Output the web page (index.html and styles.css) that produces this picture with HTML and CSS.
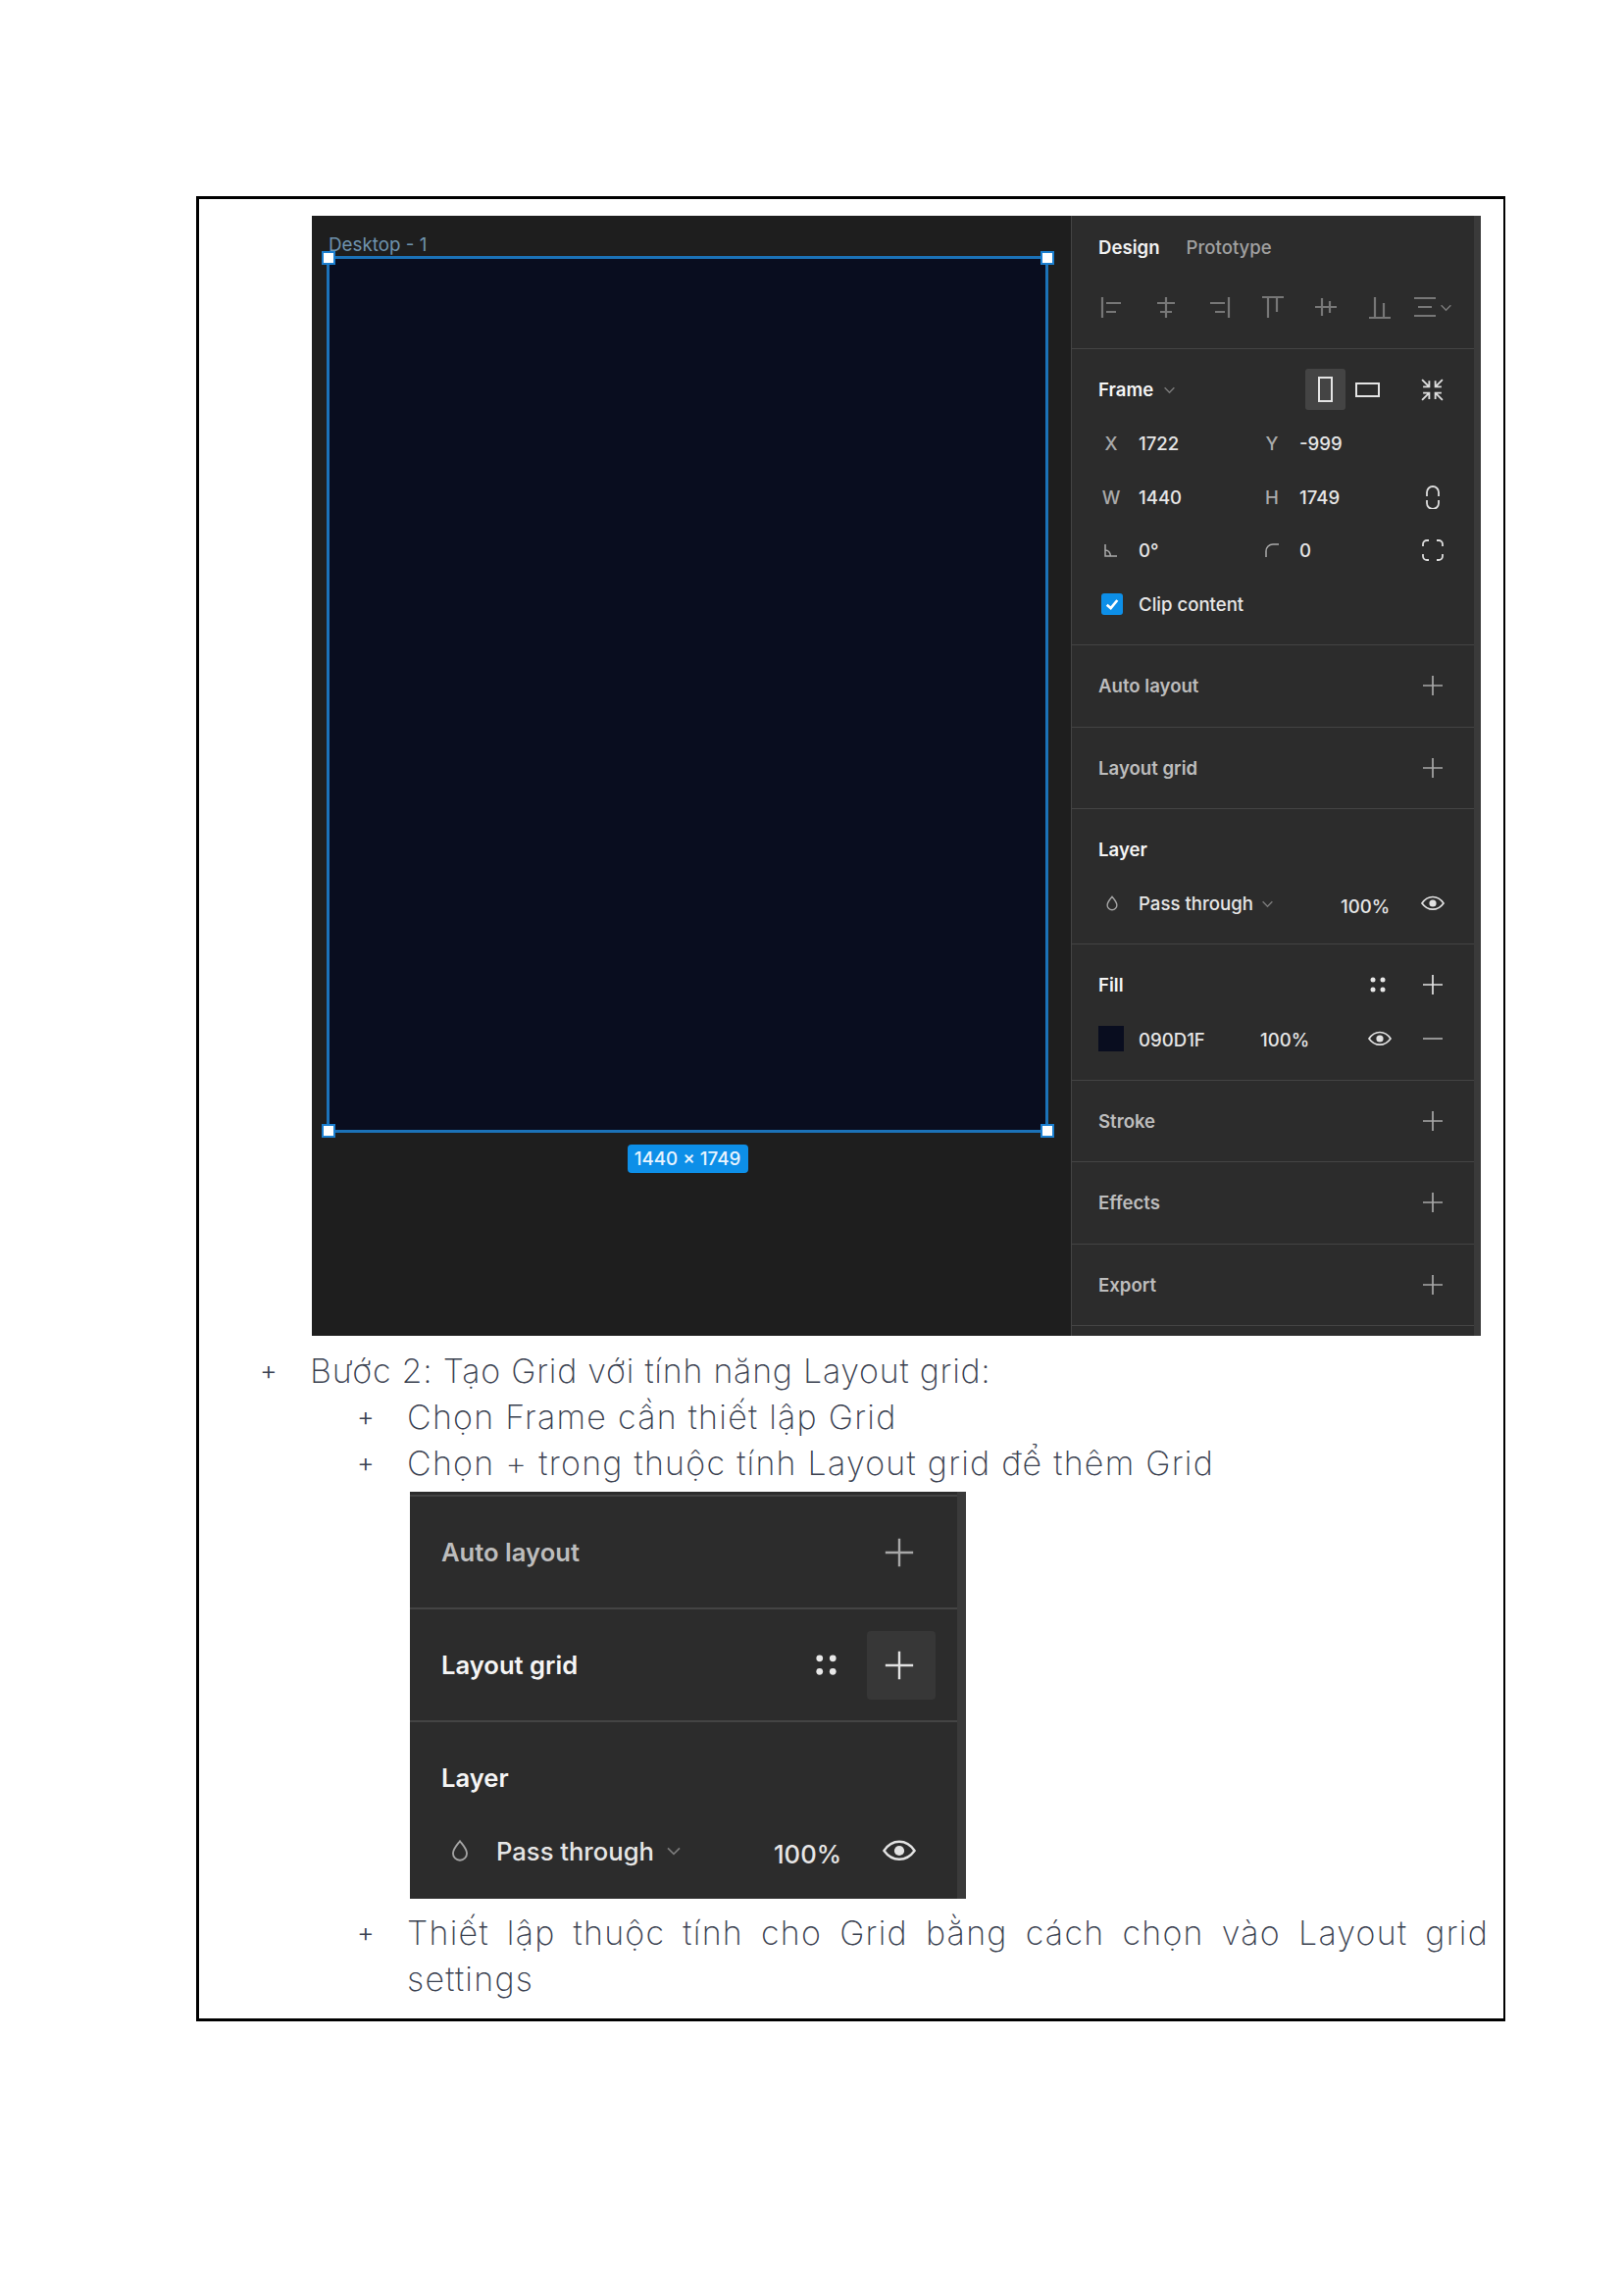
FILE: index.html
```html
<!DOCTYPE html>
<html lang="vi">
<head>
<meta charset="utf-8">
<title>Layout grid</title>
<link rel="stylesheet" href="styles.css">
</head>
<body>
<svg class="defs" width="0" height="0" aria-hidden="true">
  <symbol id="plus" viewBox="0 0 24 24"><path d="M12 2v20M2 12h20"/></symbol>
  <symbol id="minus" viewBox="0 0 24 24"><path d="M2 12h20"/></symbol>
  <symbol id="eye" viewBox="0 0 24 24"><path d="M1 12c3-4.500 6.800-6.500 11-6.500S20 7.500 23 12c-3 4.200-6.800 6.200-11 6.200S4 16.200 1 12z"/><circle class="solid" cx="12" cy="12" r="3.600"/></symbol>
  <symbol id="dots" viewBox="0 0 24 24"><circle class="solid" cx="6" cy="6" r="3"/><circle class="solid" cx="18" cy="6" r="3"/><circle class="solid" cx="6" cy="18" r="3"/><circle class="solid" cx="18" cy="18" r="3"/></symbol>
  <symbol id="drop" viewBox="0 0 24 24"><path d="M12 3c3.500 4.500 6.500 7.500 6.500 11.500a6.500 6.500 0 0 1-13 0C5.500 10.500 8.500 7.500 12 3z"/></symbol>
  <symbol id="chev" viewBox="0 0 12 12"><path d="M1.500 4l4.500 4.500L10.500 4"/></symbol>
</svg>

<main class="doc">
  <section class="shot">
    <div class="canvas">
      <div class="frame-col">
        <div class="frame-name">Desktop - 1</div>
        <div class="frame">
          <i class="handle handle--tl"></i><i class="handle handle--tr"></i>
          <i class="handle handle--bl"></i><i class="handle handle--br"></i>
        </div>
        <div class="size-badge">1440 × 1749</div>
      </div>
    </div>
    <aside class="panel">
      <div class="sec sec--tabs">
        <div class="tabs"><span class="tab tab--on">Design</span><span class="tab">Prototype</span></div>
        <div class="aligns">
          <svg class="align" viewBox="0 0 24 24"><path d="M2 2v21M6 8h15M6 17h10"/></svg>
          <svg class="align" viewBox="0 0 24 24"><path d="M12 2v21M3 8h18M6 17h12"/></svg>
          <svg class="align" viewBox="0 0 24 24"><path d="M22 2v21M3 8h15M8 17h10"/></svg>
          <svg class="align" viewBox="0 0 24 24"><path d="M1 2h22M7 2v21M16 2v15"/></svg>
          <svg class="align" viewBox="0 0 24 24"><path d="M1 12h22M8 3v18M16 6v12"/></svg>
          <svg class="align" viewBox="0 0 24 24"><path d="M1 23h22M7 2v21M16 8v15"/></svg>
          <span class="align-more">
            <svg class="align" viewBox="0 0 24 24"><path d="M1 3h22M5 12h14M1 21h22"/></svg>
            <svg class="chev" viewBox="0 0 12 12"><use href="#chev"/></svg>
          </span>
        </div>
      </div>

      <div class="sec sec--frame">
        <div class="frame-head">
          <span class="title title--on">Frame</span>
          <svg class="chev chev--frame" viewBox="0 0 12 12"><use href="#chev"/></svg>
          <span class="orient orient--on"><i class="page-p"></i></span>
          <span class="orient"><i class="page-l"></i></span>
          <svg class="collapse" viewBox="0 0 24 24"><path d="M2 2l7 7M9 3v6H3M22 2l-7 7M15 3v6h6M2 22l7-7M9 21v-6H3M22 22l-7-7M15 21v-6h6"/></svg>
        </div>
        <div class="props">
          <span class="lab">X</span><span class="val">1722</span><span class="lab">Y</span><span class="val">-999</span><span></span>
          <span class="lab">W</span><span class="val">1440</span><span class="lab">H</span><span class="val">1749</span>
          <svg class="side" viewBox="0 0 24 24"><path d="M6 11V7a6 6 0 0 1 12 0v4M6 15v3a6 6 0 0 0 12 0v-3"/></svg>
          <span class="lab"><svg class="mini" viewBox="0 0 16 16"><path d="M2 2v12h12M2 8c3 0 5 2 5.500 6"/></svg></span><span class="val">0°</span>
          <span class="lab"><svg class="mini" viewBox="0 0 16 16"><path d="M2 15V9a7 7 0 0 1 7-7h6"/></svg></span><span class="val">0</span>
          <svg class="side" viewBox="0 0 24 24"><path d="M2 8V6a4 4 0 0 1 4-4h2M16 2h2a4 4 0 0 1 4 4v2M22 16v2a4 4 0 0 1-4 4h-2M8 22H6a4 4 0 0 1-4-4v-2"/></svg>
        </div>
        <div class="clip">
          <span class="check"><svg viewBox="0 0 12 12"><path d="M2 6.500l3 2.500 5-6"/></svg></span>
          <span class="val">Clip content</span>
        </div>
      </div>

      <div class="sec sec--row"><span class="title">Auto layout</span><svg class="ico"><use href="#plus"/></svg></div>
      <div class="sec sec--row"><span class="title">Layout grid</span><svg class="ico"><use href="#plus"/></svg></div>

      <div class="sec sec--stack">
        <div class="stack-head"><span class="title title--on">Layer</span></div>
        <div class="layer-row">
          <svg class="ico ico--drop"><use href="#drop"/></svg>
          <span class="pass"><span class="val">Pass through</span><svg class="chev" viewBox="0 0 12 12"><use href="#chev"/></svg></span>
          <span class="val pct">100%</span>
          <svg class="ico ico--bright"><use href="#eye"/></svg>
        </div>
      </div>

      <div class="sec sec--stack">
        <div class="stack-head">
          <span class="title title--on">Fill</span>
          <span class="actions"><svg class="ico ico--dots"><use href="#dots"/></svg><svg class="ico ico--bright"><use href="#plus"/></svg></span>
        </div>
        <div class="fill-row">
          <i class="swatch"></i>
          <span class="val">090D1F</span>
          <span class="val">100%</span>
          <span class="actions"><svg class="ico ico--bright"><use href="#eye"/></svg><svg class="ico"><use href="#minus"/></svg></span>
        </div>
      </div>

      <div class="sec sec--row"><span class="title">Stroke</span><svg class="ico"><use href="#plus"/></svg></div>
      <div class="sec sec--row"><span class="title">Effects</span><svg class="ico"><use href="#plus"/></svg></div>
      <div class="sec sec--row"><span class="title">Export</span><svg class="ico"><use href="#plus"/></svg></div>
    </aside>
  </section>

  <p class="item item--l1"><span class="bullet">+</span><span>Bước 2: Tạo Grid với tính năng Layout grid:</span></p>
  <p class="item item--l2"><span class="bullet">+</span><span>Chọn Frame cần thiết lập Grid</span></p>
  <p class="item item--l2"><span class="bullet">+</span><span>Chọn + trong thuộc tính Layout grid để thêm Grid</span></p>

  <aside class="panel panel--crop">
    <div class="sec sec--cap"></div>
    <div class="sec sec--row"><span class="title">Auto layout</span><svg class="ico"><use href="#plus"/></svg></div>
    <div class="sec sec--row">
      <span class="title title--on">Layout grid</span>
      <span class="actions"><svg class="ico ico--dots"><use href="#dots"/></svg><span class="add-btn"><svg class="ico ico--bright"><use href="#plus"/></svg></span></span>
    </div>
    <div class="sec sec--stack sec--last">
      <div class="stack-head"><span class="title title--on">Layer</span></div>
      <div class="layer-row">
        <svg class="ico ico--drop"><use href="#drop"/></svg>
        <span class="pass"><span class="val">Pass through</span><svg class="chev" viewBox="0 0 12 12"><use href="#chev"/></svg></span>
        <span class="val pct">100%</span>
        <svg class="ico ico--bright"><use href="#eye"/></svg>
      </div>
    </div>
  </aside>

  <p class="item item--l2 item--last"><span class="bullet">+</span><span class="just">Thiết lập thuộc tính cho Grid bằng cách chọn vào Layout grid settings</span></p>
</main>
</body>
</html>
```

FILE: styles.css
```css
* { box-sizing: border-box; }
html, body { margin: 0; background: #fff; }
body { padding: 200px 121px 0 200px; font-family: Inter, "Liberation Sans", sans-serif; }
.defs { position: absolute; }
svg { fill: none; stroke: currentColor; display: block; }
.solid { fill: currentColor; stroke: none; }

.doc { width: 1335px; height: 1861px; border: 3px solid #000; border-right-width: 2px; padding-top: 17px; }

/* screenshot */
.shot { display: flex; width: 1192px; height: 1142px; margin-left: 115px; background: #1e1e1e; overflow: hidden; }
.canvas { width: 774px; flex: none; padding-left: 15px; }
.frame-col { width: 736px; display: flex; flex-direction: column; align-items: center; }
.frame-name { align-self: flex-start; height: 41px; padding: 18px 0 0 2px; font-size: 18.800px; line-height: 24px; color: #6f93ae; }
.frame { position: relative; width: 736px; height: 894px; background: #090d1f; border: 3px solid #1b72b8; }
.handle { position: absolute; width: 14px; height: 14px; background: #fff; border: 2px solid #1b7fd0; }
.handle--tl { left: -8px; top: -8px; }
.handle--tr { right: -9px; top: -8px; }
.handle--bl { left: -8px; bottom: -8px; }
.handle--br { right: -9px; bottom: -8px; }
.size-badge { margin-top: 12px; width: 123px; height: 29px; border-radius: 4px; background: #0d8fe8; color: #e8f4ff; font-size: 18.800px; font-weight: 500; line-height: 29px; text-align: center; }

/* panel */
.panel { width: 418px; flex: none; height: 1142px; background: #2c2c2c; border-left: 1px solid #444; border-right: 7px solid #3a3a3a; overflow: hidden; color: #eee; font-size: 18.600px; }
.sec { border-bottom: 1.5px solid #444; padding: 0 30px 0 27px; }
.title { font-weight: 600; color: #bdbdbd; }
.title--on { color: #f5f5f5; }
.val { color: #e6e6e6; font-weight: 500; }
.ico { width: 24px; height: 24px; color: #a8a8a8; stroke-width: 1.700; flex: none; }
.ico--bright { color: #e2e2e2; }
.ico--drop { color: #a5a5a5; width: 18px; height: 18px; stroke-width: 1.800; margin-left: 5px; }
.ico--dots { color: #e8e8e8; width: 20px; height: 20px; margin-right: 4px; }
.chev { width: 13px; height: 13px; color: #7b7b7b; stroke-width: 1.300; flex: none; }
.actions { display: flex; align-items: center; gap: 30px; }

.sec--tabs { height: 136px; }
.tabs { display: flex; gap: 27px; padding-top: 20px; height: 64px; line-height: 24px; }
.tab { font-weight: 500; color: #a0a0a0; }
.tab--on { font-weight: 600; color: #f2f2f2; }
.aligns { display: flex; align-items: center; gap: 30.500px; margin-top: 17px; padding-left: 2px; }
.align { width: 24px; height: 24px; flex: none; color: #777; stroke-width: 2.200; }
.align-more { display: flex; align-items: center; gap: 3px; margin-left: -8px; }

.sec--frame { height: 302px; padding-top: 20px; }
.frame-head { display: flex; align-items: center; height: 42px; }
.chev--frame { margin-left: 10px; margin-right: 132px; }
.orient { width: 41px; height: 42px; display: flex; align-items: center; justify-content: center; border-radius: 3px; flex: none; }
.orient--on { background: #444; }
.page-p { width: 15px; height: 26px; border: 2px solid #e4e4e4; }
.page-l { width: 25px; height: 15px; border: 2px solid #e4e4e4; margin-left: 3px; }
.collapse { width: 25px; height: 25px; margin-left: 35px; color: #ddd; stroke-width: 1.800; flex: none; }
.props { display: grid; grid-template-columns: 41px 123px 41px 1fr 24px; grid-auto-rows: 54.600px; align-items: center; margin-top: 7px; }
.lab { display: flex; justify-content: center; width: 26px; color: #aaa; font-weight: 500; }
.mini { width: 16px; height: 16px; color: #aaa; stroke-width: 1.500; }
.side { width: 24px; height: 24px; color: #ddd; stroke-width: 1.800; }
.clip { display: flex; align-items: center; height: 54px; }
.check { width: 22px; height: 22px; margin: 0 16px 0 3px; border-radius: 3px; background: #0d8fe8; color: #fff; padding: 3px; flex: none; }
.check svg { stroke-width: 2; }

.sec--row { height: 83.500px; display: flex; align-items: center; justify-content: space-between; }
.sec--stack { height: 138.250px; }
.stack-head { display: flex; align-items: center; justify-content: space-between; height: 82px; }
.layer-row { display: grid; grid-template-columns: 41px 206px 1fr 24px; align-items: center; height: 28px; }
.pass { display: flex; align-items: center; gap: 8px; }
.pct { padding-top: 6px; }
.fill-row { display: grid; grid-template-columns: 41px 124px 1fr auto; align-items: center; height: 28px; }
.fill-row .val { padding-top: 2px; }
.swatch { width: 26px; height: 26px; background: #090d1f; }

/* cropped panel */
.panel--crop { width: 567px; height: 415px; margin-left: 215px; margin-top: 6px; border-left: 0; border-right-width: 9px; font-size: 25.600px; }
.panel--crop .sec { padding: 0 42px 0 32px; border-bottom-width: 2px; }
.panel--crop .sec--cap { height: 5px; padding: 0; }
.panel--crop .sec--row { height: 115px; }
.panel--crop .sec--last { height: 180px; border-bottom: 0; }
.panel--crop .stack-head { height: 112px; }
.panel--crop .ico { width: 34px; height: 34px; stroke-width: 1.700; }
.panel--crop .ico--drop { width: 26px; height: 26px; margin-left: 6px; }
.panel--crop .ico--dots { width: 27px; height: 27px; margin: 0 3.500px; }
.panel--crop .chev { width: 16px; height: 16px; }
.panel--crop .pass { gap: 12px; }
.panel--crop .actions { gap: 25px; }
.panel--crop .layer-row { grid-template-columns: 56px 283px 1fr 34px; height: 38px; }
.panel--crop .layer-row .ico--bright { margin-right: -2px; }
.add-btn { width: 70px; height: 70px; margin-right: -20px; padding-left: 16px; display: flex; align-items: center; background: #373737; border-radius: 4px; }

/* text */
.item { display: flex; margin: 0; font-size: 34px; line-height: 47px; font-weight: 250; color: #3a4150; }
.bullet { flex: none; width: 51px; font-size: 27px; font-weight: 300; }
.item--l1 { margin: 12px 0 0 62px; letter-spacing: 0.750px; }
.item--l2 { margin-left: 161px; letter-spacing: 1.250px; }
.just { text-align: justify; }
.item--last { margin-top: 11px; padding-right: 15px; }
```
